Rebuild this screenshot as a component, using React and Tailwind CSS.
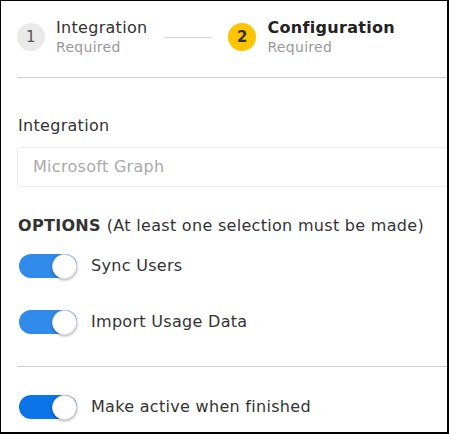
import React, { useState } from "react";

const Toggle = ({ on, onChange, tone = "bg-[#2f8aea]" }) => (
  <button
    onClick={() => onChange(!on)}
    className={`relative w-[58px] h-[24px] rounded-full shrink-0 ${on ? tone : "bg-gray-300"}`}
  >
    <span
      className={`absolute top-[-0.5px] ${on ? "right-0" : "left-0"} w-[25px] h-[25px] rounded-full bg-white shadow-[0_1px_3px_rgba(0,0,0,0.35)] border border-[#e2e2e2]`}
    />
  </button>
);

const Step = ({ num, title, active }) => (
  <div className="flex items-center">
    <div
      className={`w-[28px] h-[28px] rounded-full flex items-center justify-center text-[15px] ${
        active ? "bg-[#fcc500] text-[#333] font-bold" : "bg-[#e9e9e9] text-[#555]"
      }`}
    >
      {num}
    </div>
    <div className="ml-[11px] flex flex-col">
      <span className={`text-[16px] leading-[20px] ${active ? "font-bold text-[#222]" : "text-[#333]"}`}>
        {title}
      </span>
      <span className="text-[14px] leading-[18px] text-[#999]">Required</span>
    </div>
  </div>
);

export default function App() {
  const [sync, setSync] = useState(true);
  const [usage, setUsage] = useState(true);
  const [active, setActive] = useState(true);

  return (
    <div
      className="w-[449px] h-[434px] bg-white border-t border-l border-r-2 border-b-2 border-black overflow-hidden tracking-[0.3px]"
      style={{ fontFamily: "'DejaVu Sans', 'Noto Sans', sans-serif" }}
    >
      <div className="w-[460px] pl-[16px]">
        {/* Stepper */}
        <div className="flex items-center pt-[17px] pb-[21px] border-b border-[#cfcfcf]">
          <Step num="1" title="Integration" />
          <div className="w-[48px] h-px bg-[#d5d5d5] ml-[17px] mr-[16px]" />
          <Step num="2" title="Configuration" active />
        </div>

        {/* Integration field */}
        <div className="pt-[38px]">
          <label className="block text-[16px] leading-[20px] text-[#333] pl-px">Integration</label>
          <div className="mt-[11px] h-[40px] rounded-[4px] border border-[#ececec] flex items-center pl-[15px] text-[16px] text-[#aaa]">
            Microsoft Graph
          </div>
        </div>

        {/* Options */}
        <div className="pt-[29px] pl-px text-[16px] leading-[20px] text-[#333]">
          <span className="font-bold">OPTIONS</span>
          <span className="ml-[6px]">(At least one selection must be made)</span>
        </div>
        <div className="flex items-center mt-[18px] pl-[2px]">
          <Toggle on={sync} onChange={setSync} />
          <span className="ml-[14px] text-[16px] text-[#333]">Sync Users</span>
        </div>
        <div className="flex items-center mt-[32px] pl-[2px]">
          <Toggle on={usage} onChange={setUsage} />
          <span className="ml-[14px] text-[16px] text-[#333]">Import Usage Data</span>
        </div>

        <div className="mt-[32px] border-t border-[#cfcfcf]" />

        <div className="flex items-center mt-[28px] pl-[2px]">
          <Toggle on={active} onChange={setActive} tone="bg-[#0b74e8]" />
          <span className="ml-[14px] text-[16px] text-[#333]">Make active when finished</span>
        </div>
      </div>
    </div>
  );
}
